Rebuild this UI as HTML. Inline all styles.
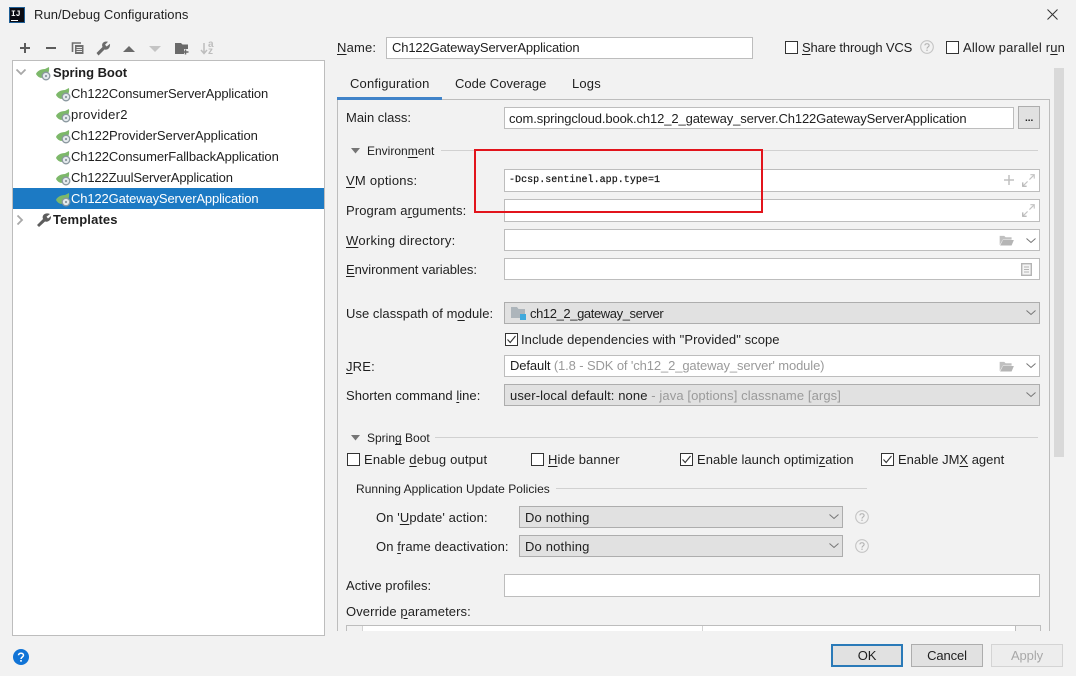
<!DOCTYPE html>
<html><head><meta charset="utf-8"><style>
html,body{margin:0;padding:0}
body{width:1076px;height:676px;position:relative;overflow:hidden;background:#f2f2f2;font-family:"Liberation Sans","Noto Sans CJK SC",sans-serif;font-size:13px;color:#1f1f1f}
.t{position:absolute;white-space:pre;line-height:18px;height:18px;letter-spacing:.17px}
.b{position:absolute;box-sizing:border-box;border:1px solid #bdbdbd;background:#fff}
.g{background:#e1e1e1;border-color:#adadad}
.c{position:absolute;box-sizing:border-box;width:13px;height:13px;border:1px solid #333;background:#fff}
.l{position:absolute;height:1px;background:#d1d1d1}
.m{color:#9a9a9a}
u{text-underline-offset:2px}
svg{position:absolute;overflow:visible}
.btn{position:absolute;box-sizing:border-box;height:23px;width:72px;top:644px;background:#e1e1e1;border:1px solid #adadad;text-align:center;line-height:21px;letter-spacing:-.1px}
</style></head><body>
<svg width="0" height="0" style="position:absolute"><defs>
<symbol id="sb" viewBox="0 0 16 16" overflow="visible"><path d="M0 8C1 5 5 3 9 3L13 1C13.500 5 12.500 8 9 11C5 13 2 11.500 0 8Z" fill="#7db86a"/><circle cx="10" cy="10" r="3.800" fill="#e4e9ec" stroke="#8a979e" stroke-width="1.300"/><circle cx="10" cy="10" r="1.100" fill="#8a979e"/></symbol>
<symbol id="q" viewBox="0 0 14 14"><circle cx="7" cy="7" r="6.300" fill="none" stroke="#c4c4c4" stroke-width="1.100"/><path d="M4.900 5.400C5 3.200 9.100 3.200 9.100 5.500C9.100 7 7 7 7 8.600" fill="none" stroke="#b0b0b0" stroke-width="1.100"/><rect x="6.400" y="9.600" width="1.200" height="1.300" fill="#b0b0b0"/></symbol>
<symbol id="dn" viewBox="0 0 10 6"><path d="M.5 .5L5 4.500L9.500 .5" fill="none" stroke="#757575" stroke-width="1"/></symbol>
<symbol id="ex" viewBox="0 0 14 14"><path d="M8 6L13 1M9 .8H13.200V5M1 13L6 8" fill="none" stroke="#c4c4c4" stroke-width="1.200"/><path d="M.8 9V13.200H5" fill="none" stroke="#b4b4b4" stroke-width="1.400"/></symbol>
<symbol id="fo" viewBox="0 0 16 12"><path d="M0 1H5L6.500 2.500H13V5H3.500L0 11Z" fill="#c0c0c0"/><path d="M3.600 5.500H15.500L13 11.500H.5Z" fill="#b5b5b5"/></symbol>
<symbol id="ck" viewBox="0 0 13 13"><path d="M2.500 6.500L5.200 9.500L10.500 3" fill="none" stroke="#333" stroke-width="1.100"/></symbol>
</defs></svg>

<!-- title -->
<div style="position:absolute;box-sizing:border-box;left:9px;top:7px;width:16px;height:16px;background:#0b0b12;border:1px solid #1f5f96"></div>
<div class="t" style="left:11px;top:6px;color:#fff;font-size:8px;font-weight:bold;letter-spacing:0;font-family:'Liberation Mono',monospace">IJ</div>
<div style="position:absolute;left:11px;top:20px;width:7px;height:1px;background:#fff"></div>
<div class="t" style="left:34px;top:6px;letter-spacing:.05px">Run/Debug Configurations</div>
<svg style="left:1047px;top:9px" width="11" height="11"><path d="M.5 .5L10.500 10.500M10.500 .5L.5 10.500" stroke="#333" stroke-width="1"/></svg>

<!-- toolbar -->
<svg style="left:0;top:0" width="240" height="60">
<path d="M20 48H30M25 43V53" stroke="#5c5c5c" stroke-width="2"/>
<path d="M46 48H56" stroke="#5c5c5c" stroke-width="2"/>
<path d="M81 43H72.500V52" fill="none" stroke="#6e6e6e" stroke-width="1.600"/><rect x="75" y="45" width="8.500" height="9" fill="#6e6e6e"/><path d="M76.500 47.500H82M76.500 49.500H82M76.500 51.500H82" stroke="#e8e8e8" stroke-width=".9"/>
<path d="M96.500 53L102.500 47C101 43.500 104 40.500 108 41.800L105 44.800L106.700 46.500L110 43.800C110.500 48 107.500 50.500 104.500 49.500L98.500 55.500Z" fill="#6a6a6a"/>
<path d="M123 52L129 46L135 52Z" fill="#6a6a6a"/>
<path d="M149 46L155 52L161 46Z" fill="#c4c4c4"/>
<path d="M175 43H181L182.500 44.500H188V49H184V54H175Z" fill="#6a6a6a"/><path d="M185.500 49.500V54.500M183 52H188.500" stroke="#6a6a6a" stroke-width="1.500"/>
<path d="M204 43V53M201 50L204 53.500L207 50" fill="none" stroke="#bdbdbd" stroke-width="1.500"/>
</svg>
<div class="t" style="left:208px;top:39.500px;font-size:10px;line-height:9px;color:#bdbdbd;letter-spacing:0;font-weight:bold">a</div>
<div class="t" style="left:208px;top:47px;font-size:10px;line-height:9px;color:#bdbdbd;letter-spacing:0;font-weight:bold">z</div>

<!-- tree -->
<div class="b" style="left:12px;top:60px;width:313px;height:576px"></div>
<div style="position:absolute;left:13px;top:188px;width:311px;height:21px;background:#1c7ac4"></div>
<svg style="left:16px;top:69px" width="10" height="7"><path d="M.5 .5L5 5L9.500 .5" fill="none" stroke="#a8a8a8" stroke-width="1.800"/></svg>
<svg style="left:17px;top:215px" width="7" height="10"><path d="M.5 .5L5 5L.5 9.500" fill="none" stroke="#a8a8a8" stroke-width="1.800"/></svg>
<svg style="left:36px;top:66px" width="16" height="16"><use href="#sb"/></svg>
<svg style="left:56px;top:87px" width="16" height="16"><use href="#sb"/></svg>
<svg style="left:56px;top:108px" width="16" height="16"><use href="#sb"/></svg>
<svg style="left:56px;top:129px" width="16" height="16"><use href="#sb"/></svg>
<svg style="left:56px;top:150px" width="16" height="16"><use href="#sb"/></svg>
<svg style="left:56px;top:171px" width="16" height="16"><use href="#sb"/></svg>
<svg style="left:56px;top:192px" width="16" height="16"><use href="#sb"/></svg>
<svg style="left:36px;top:212px" width="15" height="15"><path d="M1 13L7 7C5.500 3.500 9 0 14 2L10.500 4.800L12 6.500L15 4C15.500 8 12 10.500 9 9.500L3 15Z" fill="#5d5d5d"/></svg>
<div class="t" style="left:53px;top:64px;font-weight:bold;letter-spacing:-.03px">Spring Boot</div>
<div class="t" style="left:71px;top:85px;letter-spacing:-.1px">Ch122ConsumerServerApplication</div>
<div class="t" style="left:71px;top:106px;letter-spacing:.28px">provider2</div>
<div class="t" style="left:71px;top:127px;letter-spacing:-.06px">Ch122ProviderServerApplication</div>
<div class="t" style="left:71px;top:148px;letter-spacing:-.08px">Ch122ConsumerFallbackApplication</div>
<div class="t" style="left:71px;top:169px;letter-spacing:-.14px">Ch122ZuulServerApplication</div>
<div class="t" style="left:71px;top:190px;color:#fff;letter-spacing:-.14px">Ch122GatewayServerApplication</div>
<div class="t" style="left:53px;top:211px;font-weight:bold;letter-spacing:.15px">Templates</div>

<!-- help -->
<svg style="left:13px;top:649px" width="16" height="16"><circle cx="8" cy="8" r="8" fill="#1174d6"/><path d="M5.500 6.300C5.500 3.500 10.500 3.500 10.500 6.300C10.500 8 8 8 8 10" fill="none" stroke="#fff" stroke-width="1.500"/><rect x="7.200" y="11" width="1.600" height="1.700" fill="#fff"/></svg>

<!-- name row -->
<div class="t" style="left:337px;top:39px"><u>N</u>ame:</div>
<div class="b" style="left:386px;top:37px;width:367px;height:22px"></div>
<div class="t" style="left:392px;top:39px;letter-spacing:-.14px">Ch122GatewayServerApplication</div>
<div class="c" style="left:785px;top:41px"></div>
<div class="t" style="left:802px;top:39px;letter-spacing:-.15px"><u>S</u>hare through VCS</div>
<svg style="left:920px;top:40px" width="14" height="14"><use href="#q"/></svg>
<div class="c" style="left:946px;top:41px"></div>
<div class="t" style="left:963px;top:39px">Allow parallel r<u>u</u>n</div>

<!-- tabs -->
<div class="t" style="left:350px;top:75px">Configuration</div>
<div class="t" style="left:455px;top:75px;letter-spacing:.02px">Code Coverage</div>
<div class="t" style="left:572px;top:75px">Logs</div>

<!-- panel -->
<div style="position:absolute;box-sizing:border-box;left:337px;top:99px;width:713px;height:532px;border:1px solid #bdbdbd;border-bottom:0"></div>
<div style="position:absolute;left:337px;top:97px;width:105px;height:3px;background:#4083c9"></div>
<div style="position:absolute;left:1054px;top:68px;width:10px;height:389px;background:#d9d9d9"></div>

<div class="t" style="left:346px;top:109px;letter-spacing:0">Main class:</div>
<div class="b" style="left:504px;top:107px;width:510px;height:22px"></div>
<div class="t" style="left:509px;top:110px;letter-spacing:-.12px">com.springcloud.book.ch12_2_gateway_server.Ch122GatewayServerApplication</div>
<div class="b g" style="left:1018px;top:106px;width:22px;height:23px"></div>
<div class="t" style="left:1025px;top:110px;font-weight:bold;font-size:10px;letter-spacing:0">...</div>

<svg style="left:351px;top:148px" width="9" height="6"><path d="M0 0H9L4.500 5.500Z" fill="#757575"/></svg>
<div class="t" style="left:367px;top:142px;font-size:12px;letter-spacing:0">Environ<u>m</u>ent</div>
<div class="l" style="left:441px;top:150px;width:597px"></div>

<div class="t" style="left:346px;top:172px;letter-spacing:.25px"><u>V</u>M options:</div>
<div class="b" style="left:504px;top:169px;width:536px;height:23px"></div>
<div class="t" style="left:509px;top:172px;font-family:'Liberation Mono',monospace;font-size:10px;letter-spacing:.04px;color:#111;-webkit-text-stroke:.2px #111">-Dcsp.sentinel.app.type=1</div>
<svg style="left:1004px;top:175px" width="10" height="10"><path d="M0 5H10M5 0V10" stroke="#c0c0c0" stroke-width="1.500"/></svg>
<svg style="left:1022px;top:174px" width="13" height="13"><use href="#ex"/></svg>

<div class="t" style="left:346px;top:202px;letter-spacing:.1px">Program a<u>r</u>guments:</div>
<div class="b" style="left:504px;top:199px;width:536px;height:23px"></div>
<svg style="left:1022px;top:204px" width="13" height="13"><use href="#ex"/></svg>

<div class="t" style="left:346px;top:232px;letter-spacing:.28px"><u>W</u>orking directory:</div>
<div class="b" style="left:504px;top:229px;width:536px;height:22px"></div>
<svg style="left:999px;top:235px" width="16" height="11"><use href="#fo"/></svg>
<svg style="left:1026px;top:238px" width="10" height="6"><use href="#dn"/></svg>

<div class="t" style="left:346px;top:261px;letter-spacing:-.06px"><u>E</u>nvironment variables:</div>
<div class="b" style="left:504px;top:258px;width:536px;height:22px"></div>
<svg style="left:1021px;top:263px" width="11" height="13"><rect x=".7" y=".7" width="9.600" height="11.600" fill="#f4f4f4" stroke="#b4b4b4" stroke-width="1.400"/><path d="M3 4H8M3 6.500H8M3 9H8" stroke="#b4b4b4"/></svg>

<div class="t" style="left:346px;top:305px;letter-spacing:.05px">Use classpath of m<u>o</u>dule:</div>
<div class="b g" style="left:504px;top:302px;width:536px;height:22px"></div>
<svg style="left:511px;top:307px" width="16" height="14"><path d="M0 0H6L7.500 2H14V11H0Z" fill="#adb5bb"/><rect x="9" y="7" width="6" height="6" fill="#3fa9dc"/></svg>
<div class="t" style="left:530px;top:305px;letter-spacing:-.4px">ch12_2_gateway_server</div>
<svg style="left:1026px;top:310px" width="10" height="6"><use href="#dn"/></svg>

<div class="c" style="left:505px;top:333px"></div>
<svg style="left:505px;top:333px" width="13" height="13"><use href="#ck"/></svg>
<div class="t" style="left:521px;top:331px;letter-spacing:.07px">Include dependencies with "Provided" scope</div>

<div class="t" style="left:346px;top:358px"><u>J</u>RE:</div>
<div class="b" style="left:504px;top:355px;width:536px;height:22px"></div>
<div class="t" style="left:510px;top:357px;letter-spacing:-.12px">Default <span class="m">(1.8 - SDK of 'ch12_2_gateway_server' module)</span></div>
<svg style="left:999px;top:361px" width="16" height="11"><use href="#fo"/></svg>
<svg style="left:1026px;top:363px" width="10" height="6"><use href="#dn"/></svg>

<div class="t" style="left:346px;top:387px;letter-spacing:.03px">Shorten command <u>l</u>ine:</div>
<div class="b g" style="left:504px;top:384px;width:536px;height:22px"></div>
<div class="t" style="left:510px;top:387px;letter-spacing:.1px">user-local default: none <span class="m">- java [options] classname [args]</span></div>
<svg style="left:1026px;top:392px" width="10" height="6"><use href="#dn"/></svg>

<svg style="left:351px;top:435px" width="9" height="6"><path d="M0 0H9L4.500 5.500Z" fill="#757575"/></svg>
<div class="t" style="left:367px;top:429px;font-size:12px;letter-spacing:0">Sprin<u>g</u> Boot</div>
<div class="l" style="left:435px;top:437px;width:603px"></div>

<div class="c" style="left:347px;top:453px"></div>
<div class="t" style="left:364px;top:451px">Enable <u>d</u>ebug output</div>
<div class="c" style="left:531px;top:453px"></div>
<div class="t" style="left:548px;top:451px;letter-spacing:.08px"><u>H</u>ide banner</div>
<div class="c" style="left:680px;top:453px"></div>
<svg style="left:680px;top:453px" width="13" height="13"><use href="#ck"/></svg>
<div class="t" style="left:697px;top:451px;letter-spacing:.05px">Enable launch optimi<u>z</u>ation</div>
<div class="c" style="left:881px;top:453px"></div>
<svg style="left:881px;top:453px" width="13" height="13"><use href="#ck"/></svg>
<div class="t" style="left:898px;top:451px;letter-spacing:0">Enable JM<u>X</u> agent</div>

<div class="t" style="left:356px;top:480px;font-size:12px;letter-spacing:.03px">Running Application Update Policies</div>
<div class="l" style="left:556px;top:488px;width:311px"></div>

<div class="t" style="left:376px;top:509px;letter-spacing:.1px">On '<u>U</u>pdate' action:</div>
<div class="b g" style="left:519px;top:506px;width:324px;height:22px"></div>
<div class="t" style="left:525px;top:509px;letter-spacing:.17px">Do nothing</div>
<svg style="left:829px;top:514px" width="10" height="6"><use href="#dn"/></svg>
<svg style="left:855px;top:510px" width="14" height="14"><use href="#q"/></svg>

<div class="t" style="left:376px;top:538px;letter-spacing:.08px">On <u>f</u>rame deactivation:</div>
<div class="b g" style="left:519px;top:535px;width:324px;height:22px"></div>
<div class="t" style="left:525px;top:538px;letter-spacing:.17px">Do nothing</div>
<svg style="left:829px;top:543px" width="10" height="6"><use href="#dn"/></svg>
<svg style="left:855px;top:539px" width="14" height="14"><use href="#q"/></svg>

<div class="t" style="left:346px;top:577px;letter-spacing:.04px">Active profiles:</div>
<div class="b" style="left:504px;top:574px;width:536px;height:23px"></div>

<div class="t" style="left:346px;top:603px;letter-spacing:.1px">Override <u>p</u>arameters:</div>
<div style="position:absolute;box-sizing:border-box;left:346px;top:625px;width:695px;height:6px;border:1px solid #bdbdbd;border-bottom:0;background:#f2f2f2"></div>
<div style="position:absolute;left:362px;top:626px;width:653px;height:5px;background:#fff;border-left:1px solid #d4d4d4"></div>
<div style="position:absolute;left:702px;top:626px;width:1px;height:5px;background:#d4d4d4"></div>
<div style="position:absolute;left:1015px;top:626px;width:1px;height:5px;background:#bdbdbd"></div>

<!-- red box -->
<div style="position:absolute;box-sizing:border-box;left:474px;top:149px;width:289px;height:64px;border:2px solid #e2141c"></div>

<!-- buttons -->
<div class="btn" style="left:831px;border:2px solid #2a7ab8;line-height:19px">OK</div>
<div class="btn" style="left:911px">Cancel</div>
<div class="btn" style="left:991px;background:#ededed;border-color:#d4d4d4;color:#a8a8a8">Apply</div>
</body></html>
